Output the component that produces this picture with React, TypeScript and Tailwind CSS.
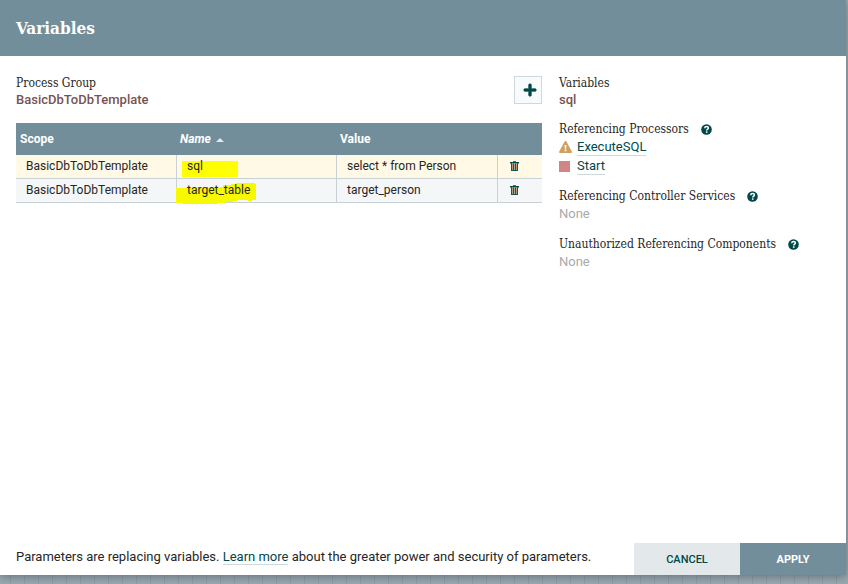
import { useState } from "react";
import type { ReactNode } from "react";
import { FaPlus } from "react-icons/fa";

const slab = "font-['Roboto_Slab','DejaVu_Serif_Condensed','DejaVu_Serif',serif]";

type Variable = { scope: string; name: string; value: string };

const variables: Variable[] = [
  { scope: "BasicDbToDbTemplate", name: "sql", value: "select * from Person" },
  { scope: "BasicDbToDbTemplate", name: "target_table", value: "target_person" },
];

function TrashIcon() {
  return (
    <svg viewBox="0 0 9 11" className="h-[11px] w-[9px]" aria-hidden="true">
      <path fill="#4d7476" d="M3 0h3v1H3z" />
      <path fill="#004849" d="M0 1h9v1.500H0z" />
      <path fill="#c39a6c" d="M2 2.500h1V9H2zM6 2.500h1V9H6z" />
      <path fill="#8fb3bb" d="M4 2.500h1V9H4z" />
      <path fill="#1d5557" d="M1 2h1v7h5V2h1v8H1zM3 2.500h1V9H3zM5 2.500h1V9H5z" />
    </svg>
  );
}

function WarningIcon() {
  return (
    <svg viewBox="0 0 13 12" className="h-3 w-[13px] shrink-0" aria-hidden="true">
      <path
        fill="#cf9f5d"
        fillRule="evenodd"
        d="M6.500 0q.6 0 .9.600l5.400 10q.5 1.200-.8 1.400H1q-1.300-.2-.8-1.400l5.400-10Q5.900 0 6.500 0zM5.500 4l.3 3.700h1.400L7.500 4zM5.600 8.600v1.600h1.800V8.600z"
      />
    </svg>
  );
}

function HelpIcon() {
  return (
    <svg viewBox="0 0 11 11" className="size-[11px]" aria-hidden="true">
      <circle cx="5.500" cy="5.500" r="5.300" fill="#004849" />
      <path
        d="M3.700 4.200C3.800 2.900 4.600 2.500 5.600 2.500c1 0 1.800.6 1.800 1.500C7.400 5.200 5.700 5.100 5.700 6.500"
        fill="none"
        stroke="#fff"
        strokeWidth="1.500"
      />
      <path d="M4.900 7.300h1.600v1.500H4.900z" fill="#fff" />
    </svg>
  );
}

function Marker({ name }: { name: string }) {
  if (name === "sql") {
    return <span className="absolute top-1.5 left-[5px] h-4 w-14 bg-[#ffff00]" />;
  }
  return (
    <svg viewBox="0 0 80 22" className="absolute top-1 -left-px h-[22px] w-20" aria-hidden="true">
      <path
        fill="#f6f900"
        d="M0 5H44V4H47V2H55V1H60V0H79V1H80V17H76V18H72V17H61V18H57V19H50V20H42V21H6V20H0Z"
      />
    </svg>
  );
}

function ReferenceHeading({ children }: { children: string }) {
  return (
    <h2 className={`flex h-[18px] items-center gap-3 text-[12px] leading-[18px] ${slab}`}>
      {children}
      <button type="button" aria-label={`About ${children}`}>
        <HelpIcon />
      </button>
    </h2>
  );
}

function TextLink({ children }: { children: ReactNode }) {
  return (
    <a href="#" className="border-b border-[#ccdadb] text-[#004849]">
      {children}
    </a>
  );
}

export default function App() {
  const [selected, setSelected] = useState("sql");

  return (
    <div className="flex min-h-screen bg-[#98a8b0] bg-[linear-gradient(to_right,#8d9da5_1px,transparent_1px)] bg-size-[14px_14px] bg-position-[10px_0] pr-0.5 pb-[9px] font-[Roboto,sans-serif] text-[13px] text-[#262626]">
      <main className="flex flex-1 flex-col bg-white shadow-[0_2px_8px_rgba(0,0,0,0.3)]">
        <header className="flex h-14 items-center bg-[#728e9b] px-4">
          <h1 className={`text-[17px] leading-6 font-bold text-white ${slab}`}>Variables</h1>
        </header>

        <div className="flex flex-1 gap-[17px] px-4 pt-[18px]">
          <section className="min-w-0 flex-1">
            <div className="flex h-[49px] items-start justify-between">
              <div>
                <h2 className={`text-[12px] leading-[18px] ${slab}`}>Process Group</h2>
                <p className="leading-4 font-medium text-[#775351]">BasicDbToDbTemplate</p>
              </div>
              <button
                type="button"
                aria-label="Add variable"
                className="mt-0.5 flex size-7 items-center justify-center border border-[#ccdadb] bg-[#f9fafb] pl-1 text-[#004849]"
              >
                <FaPlus size={14} stroke="currentColor" strokeWidth={24} />
              </button>
            </div>

            <table className="w-full table-fixed border-separate border-spacing-0 text-left text-[12px]">
              <colgroup>
                <col className="w-[161px]" />
                <col className="w-[160px]" />
                <col />
                <col className="w-11" />
              </colgroup>
              <thead className="h-8 bg-[#728e9b] text-white">
                <tr>
                  <th className="px-1 font-bold">Scope</th>
                  <th className="px-[3px] font-bold italic">
                    <span className="inline-flex items-center gap-[5px]">
                      Name
                      <svg viewBox="0 0 8 4" className="mt-px h-1 w-2" aria-hidden="true">
                        <path d="M4 0 8 4H0Z" fill="#e3e8eb" />
                      </svg>
                    </span>
                  </th>
                  <th className="px-[3px] font-bold">Value</th>
                  <th aria-label="Actions" />
                </tr>
              </thead>
              <tbody>
                {variables.map((v) => (
                  <tr
                    key={v.name}
                    onClick={() => setSelected(v.name)}
                    className={`h-6 leading-4 ${selected === v.name ? "bg-[#fff9e5]" : "bg-[#f4f6f7]"}`}
                  >
                    <td className="border-r border-b border-[#c7d2d7] px-2.5 pt-0 pb-0.5">{v.scope}</td>
                    <td className="relative border-r border-b border-[#c7d2d7] px-2.5 pt-0 pb-0.5">
                      <Marker name={v.name} />
                      <span className="relative">{v.name}</span>
                    </td>
                    <td className="border-r border-b border-[#c7d2d7] px-2.5 pt-0 pb-0.5">{v.value}</td>
                    <td className="border-b border-[#c7d2d7] px-3 py-0">
                      <button type="button" aria-label={`Delete ${v.name}`} className="block">
                        <TrashIcon />
                      </button>
                    </td>
                  </tr>
                ))}
              </tbody>
            </table>
          </section>

          <aside className="flex w-[271px] shrink-0 flex-col gap-3">
            <div>
              <h2 className={`text-[12px] leading-[18px] ${slab}`}>Variables</h2>
              <p className="leading-4 font-medium text-[#775351]">{selected}</p>
            </div>
            <div>
              <ReferenceHeading>Referencing Processors</ReferenceHeading>
              <ul className="flex flex-col gap-px">
                <li className="flex h-[18px] items-center gap-[5px] leading-4">
                  <WarningIcon />
                  <TextLink>ExecuteSQL</TextLink>
                </li>
                <li className="flex h-[18px] items-center gap-[7px] leading-4">
                  <span className="size-[11px] bg-[#d18686]" />
                  <TextLink>Start</TextLink>
                </li>
              </ul>
            </div>
            <div>
              <ReferenceHeading>Referencing Controller Services</ReferenceHeading>
              <p className="leading-[18px] text-[#aaaaaa]">None</p>
            </div>
            <div>
              <ReferenceHeading>Unauthorized Referencing Components</ReferenceHeading>
              <p className="leading-[18px] text-[#aaaaaa]">None</p>
            </div>
          </aside>
        </div>

        <footer className="flex items-start justify-between pl-4">
          <p className="pt-1.5 leading-4">
            Parameters are replacing variables. <TextLink>Learn more</TextLink> about the greater power and
            security of parameters.
          </p>
          <div className="flex text-[11px] leading-4 font-medium">
            <button type="button" className="h-8 w-[106px] bg-[#e3e8eb] pt-0.5 text-[#004849]">
              CANCEL
            </button>
            <button type="button" className="h-8 w-[106px] bg-[#728e9b] pt-0.5 font-bold text-white">
              APPLY
            </button>
          </div>
        </footer>
      </main>
    </div>
  );
}
